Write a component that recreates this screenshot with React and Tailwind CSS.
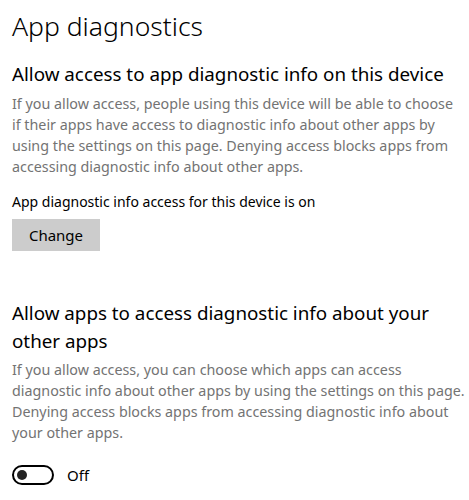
import { useState } from "react";

function Toggle({ on, onChange }) {
  return (
    <button
      type="button"
      onClick={() => onChange(!on)}
      className="flex items-center gap-[13px]"
    >
      <span
        className={`flex items-center w-[42px] h-[20px] rounded-full border-2 px-[3px] ${on ? "bg-[#0078d7] border-[#0078d7] justify-end" : "border-black bg-white justify-start"}`}
      >
        <span className={`w-[10px] h-[10px] rounded-full ${on ? "bg-white" : "bg-[#222]"}`} />
      </span>
      <span className="text-[15px] leading-[20px] text-black">{on ? "On" : "Off"}</span>
    </button>
  );
}

function App() {
  const [appsAccess, setAppsAccess] = useState(false);

  return (
    <div
      className="min-h-screen bg-white px-3 pt-[8px] text-black"
      style={{ fontFamily: '"Noto Sans", "Open Sans", sans-serif' }}
    >
      <h1 className="text-[26.5px] font-light leading-[36px]">App diagnostics</h1>

      <h2 className="mt-[16px] text-[18.8px] leading-[28px] whitespace-nowrap">
        Allow access to app diagnostic info on this device
      </h2>
      <p className="mt-[5px] text-[14.3px] leading-[21px] text-[#737373] whitespace-nowrap">
        If you allow access, people using this device will be able to choose
        <br />
        if their apps have access to diagnostic info about other apps by
        <br />
        using the settings on this page. Denying access blocks apps from
        <br />
        accessing diagnostic info about other apps.
      </p>

      <p className="mt-[14px] text-[14px] leading-[21px]">
        App diagnostic info access for this device is on
      </p>
      <button
        type="button"
        className="mt-[7px] w-[88px] h-[32px] bg-[#cccccc] text-[15px] text-black"
      >
        Change
      </button>

      <h2 className="mt-[48px] text-[18.8px] leading-[28px] whitespace-nowrap">
        Allow apps to access diagnostic info about your
        <br />
        other apps
      </h2>
      <p className="mt-[4px] text-[14.3px] leading-[21px] text-[#737373] whitespace-nowrap">
        If you allow access, you can choose which apps can access
        <br />
        diagnostic info about other apps by using the settings on this page.
        <br />
        Denying access blocks apps from accessing diagnostic info about
        <br />
        your other apps.
      </p>

      <div className="mt-[22px]">
        <Toggle on={appsAccess} onChange={setAppsAccess} />
      </div>
    </div>
  );
}

export default App;
